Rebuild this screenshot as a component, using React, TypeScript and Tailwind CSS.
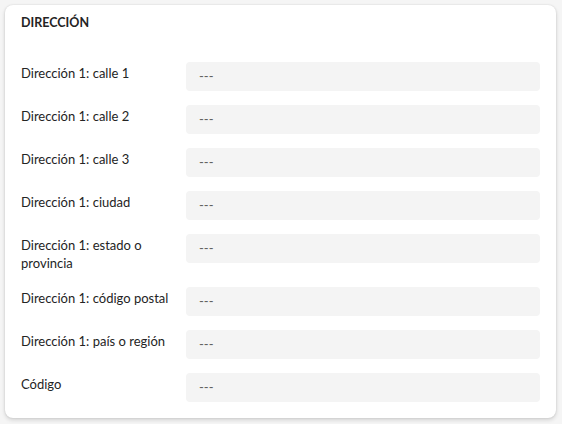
import React from 'react'

const fields = [
  'Dirección 1: calle 1',
  'Dirección 1: calle 2',
  'Dirección 1: calle 3',
  'Dirección 1: ciudad',
  'Dirección 1: estado o provincia',
  'Dirección 1: código postal',
  'Dirección 1: país o región',
  'Código',
]

export default function App() {
  return (
    <div className="min-h-screen bg-[#f5f5f5] p-[5px] pr-[6px] font-['Lato',sans-serif] text-[#242424]">
      <div className="rounded-lg bg-white px-4 pt-[10px] pb-[16px] shadow-[0_0_2px_rgba(0,0,0,0.12),0_2px_4px_rgba(0,0,0,0.14)]">
        <h2 className="text-[12.5px] leading-4 font-bold">DIRECCIÓN</h2>

        <div className="mt-[31px] space-y-[14px]">
          {fields.map(label => (
            <div key={label} className="flex items-start">
              <label className="w-[160px] shrink-0 pt-[2px] pb-[1px] text-[13px] leading-[18px]">
                {label}
              </label>
              <div className="ml-[5px] flex h-[29px] flex-1 items-center rounded bg-[#f4f4f4] pl-[13px] text-[13px] text-[#616161]">
                ---
              </div>
            </div>
          ))}
        </div>
      </div>
    </div>
  )
}
